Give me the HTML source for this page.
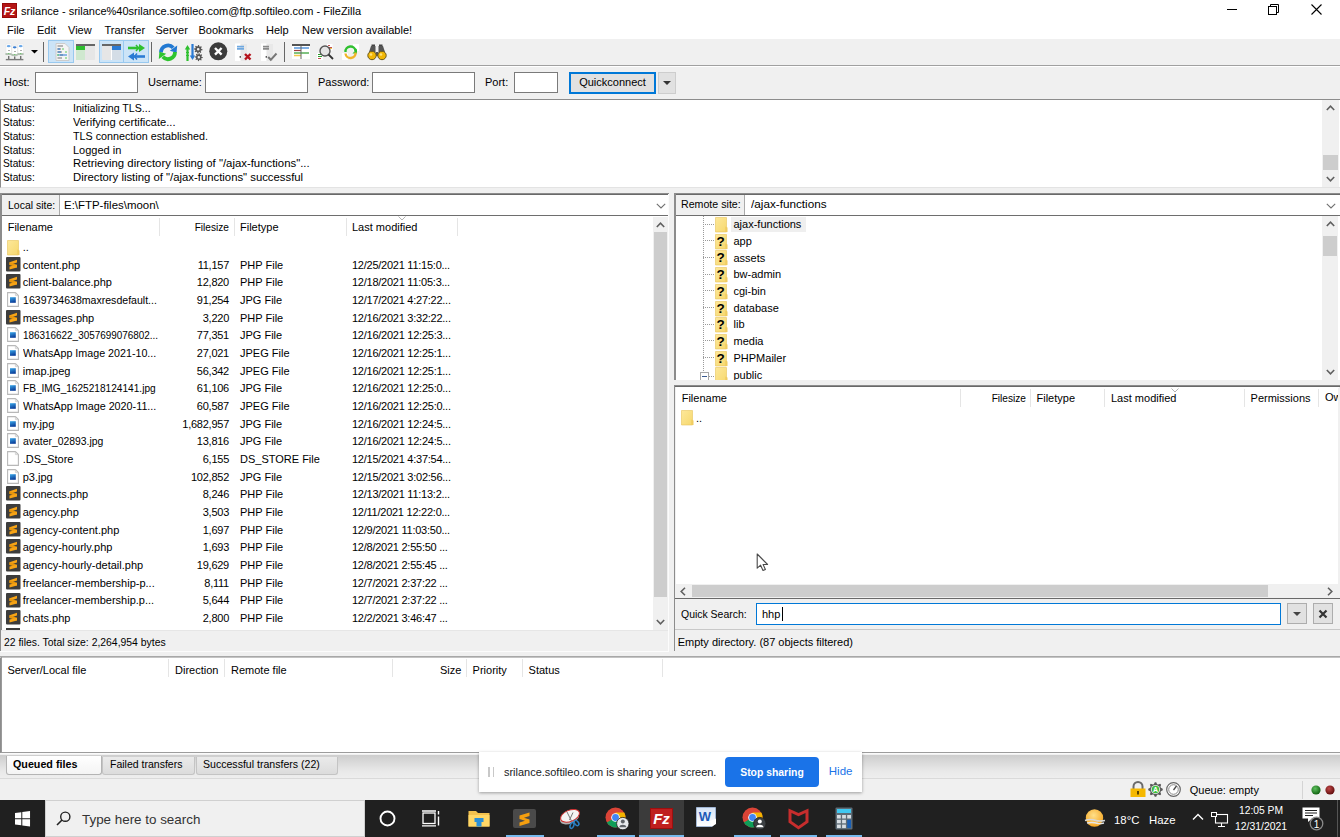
<!DOCTYPE html>
<html><head><meta charset="utf-8">
<style>
*{box-sizing:border-box;margin:0;padding:0}
html,body{width:1340px;height:837px;overflow:hidden;background:#f0f0f0;font-family:"Liberation Sans",sans-serif;font-size:11px;color:#000;position:relative}
.a{position:absolute}
.t{position:absolute;white-space:nowrap}
svg.a{overflow:visible}
</style></head><body>

<div class="a" style="left:0px;top:0px;width:1340px;height:39px;background:#fff;"></div>
<svg class="a" style="left:2px;top:3px;" width="15" height="15" viewBox="0 0 15 15"><rect x="0" y="0" width="15" height="15" fill="#b31515"/><rect x="0.5" y="0.5" width="14" height="14" fill="none" stroke="#7a0000" stroke-width="1" stroke-dasharray="1 1"/><text x="7.5" y="11.6" text-anchor="middle" font-family="Liberation Sans" font-style="italic" font-weight="bold" font-size="10.5" fill="#fff">Fz</text></svg>
<div class="t" style="top:4.49px;font-size:11px;line-height:14px;left:21px;">srilance - srilance%40srilance.softileo.com@ftp.softileo.com - FileZilla</div>
<div class="a" style="left:1227px;top:9px;width:10px;height:1px;background:#000;"></div>
<svg class="a" style="left:1268px;top:4px;" width="12" height="11" viewBox="0 0 12 11"><rect x="0.5" y="2.5" width="8" height="8" fill="none" stroke="#000"/><path d="M2.5 2.5V0.5H10.5V8.5H8.5" fill="none" stroke="#000"/></svg>
<svg class="a" style="left:1311px;top:4px;" width="12" height="12" viewBox="0 0 12 12"><path d="M0.5 0.5L10.5 10.5M10.5 0.5L0.5 10.5" stroke="#000" stroke-width="1.1"/></svg>
<div class="t" style="top:23.49px;font-size:11px;line-height:14px;left:7px;">File</div>
<div class="t" style="top:23.49px;font-size:11px;line-height:14px;left:37px;">Edit</div>
<div class="t" style="top:23.49px;font-size:11px;line-height:14px;left:68px;">View</div>
<div class="t" style="top:23.49px;font-size:11px;line-height:14px;left:104.5px;">Transfer</div>
<div class="t" style="top:23.49px;font-size:11px;line-height:14px;left:155.5px;">Server</div>
<div class="t" style="top:23.49px;font-size:11px;line-height:14px;left:198.5px;">Bookmarks</div>
<div class="t" style="top:23.49px;font-size:11px;line-height:14px;left:266px;">Help</div>
<div class="t" style="top:23.49px;font-size:11px;line-height:14px;left:302px;">New version available!</div>
<div class="a" style="left:0px;top:65px;width:1340px;height:1px;background:#a0a0a0;"></div>
<div class="a" style="left:0px;top:66px;width:1340px;height:1px;background:#fff;"></div>
<svg class="a" style="left:5px;top:42px;" width="19" height="19" viewBox="0 0 19 19"><rect x="1" y="2" width="5.5" height="11" fill="#fff" stroke="#e2e2e2" stroke-width=".5"/><rect x="7" y="3.2" width="5.5" height="11" fill="#fff" stroke="#e2e2e2" stroke-width=".5"/><rect x="13" y="2" width="5.5" height="11" fill="#fff" stroke="#e2e2e2" stroke-width=".5"/><ellipse cx="3.7" cy="4.2" rx="1.9" ry="1.1" fill="#6aa8e8"/><ellipse cx="9.7" cy="5.3" rx="1.9" ry="1.1" fill="#3d7fd0"/><ellipse cx="15.7" cy="4.2" rx="1.9" ry="1.1" fill="#6aa8e8"/><path d="M3 8.5H5M9 9.5H11M15 8.5H17" stroke="#999" stroke-width=".8"/><path d="M0.5 12H6.5M6.5 13H12.5M12.5 12H18.5" stroke="#6a8a6a" stroke-width="1"/><path d="M3.7 11V12M9.7 12V13M15.7 11V12" stroke="#66cc66" stroke-width="1"/><path d="M3.7 14V17.5M9.7 14.5V17.5M15.7 14V17.5" stroke="#707070" stroke-width="1.4"/><path d="M0.8 17.6H18.4" stroke="#7a7a7a" stroke-width="1.4"/></svg>
<svg class="a" style="left:30.5px;top:50px;" width="7" height="3.5" viewBox="0 0 7 3.5"><path d="M0 0H7L3.5 3.5Z" fill="#000"/></svg>
<div class="a" style="left:43px;top:42px;width:1px;height:20px;background:#666;"></div>
<div class="a" style="left:48px;top:40px;width:26px;height:23px;background:#cce4f7;border:1px solid #99c9ef;"></div>
<svg class="a" style="left:55px;top:43px;" width="15" height="18" viewBox="0 0 15 18"><path d="M1 0.5H10L14 4.5V17.5H1Z" fill="#f4f4f4" stroke="#ccc"/><path d="M2.5 3H8M2.5 6H6M2.5 9H7M5 12H8M2.5 15H7" stroke="#777" stroke-width="1.2"/><path d="M2.5 6H5M2.5 9H6M2.5 12H12" stroke="#2b7bd4" stroke-width="1.2"/><path d="M7 6H9M10 9H12M2 12H4M10 15H12" stroke="#5cc95c" stroke-width="1.2"/></svg>
<svg class="a" style="left:76px;top:44px;" width="19" height="16" viewBox="0 0 19 16"><rect x="0" y="0" width="19" height="16" fill="#e6e6e6" rx="1"/><rect x="0" y="0" width="19" height="2" fill="#666"/><rect x="0" y="2" width="9" height="4" fill="#2fbf2f"/><rect x="0" y="6" width="9" height="10" fill="#cfe8cf"/></svg>
<div class="a" style="left:99px;top:40px;width:50px;height:23px;background:#cce4f7;border:1px solid #99c9ef;"></div>
<div class="a" style="left:123px;top:41px;width:1px;height:21px;background:#99c9ef;"></div>
<svg class="a" style="left:102px;top:44px;" width="19" height="16" viewBox="0 0 19 16"><rect x="0" y="0" width="19" height="16" fill="#e6e6e6" rx="1"/><rect x="0" y="0" width="19" height="2" fill="#666"/><rect x="10" y="2" width="9" height="4" fill="#2b7bd4"/><rect x="10" y="6" width="9" height="10" fill="#d4dde6"/><rect x="9" y="6" width="1" height="10" fill="#fff"/></svg>
<svg class="a" style="left:127px;top:43px;" width="19" height="18" viewBox="0 0 19 18"><path d="M1 5H14" stroke="#2fc02f" stroke-width="2.6"/><path d="M12 1L18 5L12 9Z" fill="#2fc02f"/><path d="M9 2L11.5 5L9 8" fill="none" stroke="#2fc02f" stroke-width="1.5"/><path d="M5 13.5H18" stroke="#2b7bd4" stroke-width="2.6"/><path d="M7 9.5L1 13.5L7 17.5Z" fill="#2b7bd4"/><path d="M10 10.5L7.5 13.5L10 16.5" fill="none" stroke="#2b7bd4" stroke-width="1.5"/></svg>
<div class="a" style="left:151px;top:42px;width:1px;height:20px;background:#666;"></div>
<svg class="a" style="left:158px;top:42px;" width="20" height="20" viewBox="0 0 20 20"><path d="M3 10.5A7 7 0 0 1 15.2 5.8" fill="none" stroke="#2279d2" stroke-width="3.8"/><path d="M19.2 3.6L11.8 8.8L18.6 10.8Z" fill="#2279d2"/><path d="M17 10.1A7 7 0 0 1 4.8 14.8" fill="none" stroke="#2ec42e" stroke-width="3.8"/><path d="M0.8 17L8.2 11.8L1.4 9.8Z" fill="#2ec42e"/></svg>
<svg class="a" style="left:184px;top:43px;" width="19" height="19" viewBox="0 0 19 19"><path d="M3.5 4V18" stroke="#2fc02f" stroke-width="2.2"/><path d="M0.8 6.5L3.5 2L6.2 6.5Z" fill="#2fc02f"/><path d="M2 9.5H5M2 12.5H5" stroke="#2fc02f" stroke-width="1"/><path d="M8.5 1V15" stroke="#2b7bd4" stroke-width="2.2"/><path d="M5.8 12.5L8.5 17L11.2 12.5Z" fill="#2b7bd4"/><path d="M18.50 6.30 L18.42 7.14 L16.97 7.45 L16.69 7.97 L17.24 9.34 L16.59 9.88 L15.35 9.07 L14.79 9.24 L14.20 10.60 L13.36 10.52 L13.05 9.07 L12.53 8.79 L11.16 9.34 L10.62 8.69 L11.43 7.45 L11.26 6.89 L9.90 6.30 L9.98 5.46 L11.43 5.15 L11.71 4.63 L11.16 3.26 L11.81 2.72 L13.05 3.53 L13.61 3.36 L14.20 2.00 L15.04 2.08 L15.35 3.53 L15.87 3.81 L17.24 3.26 L17.78 3.91 L16.97 5.15 L17.14 5.71Z M15.50 6.30 A1.3 1.3 0 1 0 12.90 6.30 A1.3 1.3 0 1 0 15.50 6.30Z" fill="#555" fill-rule="evenodd"/><path d="M18.80 14.20 L18.72 14.98 L17.39 15.27 L17.13 15.76 L17.63 17.03 L17.02 17.53 L15.87 16.79 L15.35 16.95 L14.80 18.20 L14.02 18.12 L13.73 16.79 L13.24 16.53 L11.97 17.03 L11.47 16.42 L12.21 15.27 L12.05 14.75 L10.80 14.20 L10.88 13.42 L12.21 13.13 L12.47 12.64 L11.97 11.37 L12.58 10.87 L13.73 11.61 L14.25 11.45 L14.80 10.20 L15.58 10.28 L15.87 11.61 L16.36 11.87 L17.63 11.37 L18.13 11.98 L17.39 13.13 L17.55 13.65Z M16.00 14.20 A1.2 1.2 0 1 0 13.60 14.20 A1.2 1.2 0 1 0 16.00 14.20Z" fill="#555" fill-rule="evenodd"/></svg>
<svg class="a" style="left:209px;top:42px;" width="19" height="19" viewBox="0 0 19 19"><circle cx="9.3" cy="9.3" r="9" fill="#3c3c3c"/><path d="M6 6L12.6 12.6M12.6 6L6 12.6" stroke="#fff" stroke-width="2.4"/></svg>
<svg class="a" style="left:234px;top:43px;" width="19" height="19" viewBox="0 0 19 19"><rect x="1" y="0.5" width="12" height="17.5" fill="#fff"/><rect x="6.5" y="0.5" width="6.5" height="17.5" fill="#e8e8e8"/><path d="M3 3.6H10M3 5.9H10" stroke="#6fa8e0" stroke-width="1.6"/><rect x="5.6" y="13.2" width="1.4" height="1.4" fill="#333"/><path d="M11 11L16.5 16.5M16.5 11L11 16.5" stroke="#b5121b" stroke-width="2.4"/></svg>
<svg class="a" style="left:260px;top:43px;" width="19" height="19" viewBox="0 0 19 19"><rect x="1" y="0.5" width="12" height="17.5" fill="#fff"/><rect x="6.5" y="0.5" width="6.5" height="17.5" fill="#e8e8e8"/><path d="M3 3.6H9M3 5.9H9" stroke="#8a8a8a" stroke-width="1.6"/><rect x="5.6" y="13.2" width="1.4" height="1.4" fill="#333"/><path d="M8.2 14L10.8 16.8L16.5 10.5" fill="none" stroke="#777" stroke-width="2"/></svg>
<div class="a" style="left:284px;top:42px;width:1px;height:20px;background:#666;"></div>
<svg class="a" style="left:292px;top:44px;" width="19" height="16" viewBox="0 0 19 16"><rect x="0" y="0" width="18" height="15" fill="#fff"/><rect x="0" y="0" width="18" height="2" fill="#555"/><path d="M2 4H17" stroke="#2b7bd4" stroke-width="1.2"/><path d="M2 6.5H9" stroke="#a04040" stroke-width="1.2"/><path d="M2 9H17" stroke="#2a9a2a" stroke-width="1.2"/><path d="M2 11.5H9" stroke="#f2c94c" stroke-width="1.5"/><path d="M9 2V15" stroke="#666" stroke-width="1"/></svg>
<svg class="a" style="left:317px;top:43px;" width="19" height="19" viewBox="0 0 19 19"><rect x="10" y="1" width="5.5" height="6.5" fill="#fff"/><path d="M11 2.5H13M11.5 4.5H15" stroke="#c05050" stroke-width="1"/><path d="M11 5.5H15" stroke="#f2c94c"/><rect x="0" y="10" width="6" height="7" fill="#fff"/><path d="M1 11.5H4M1 13.5H5" stroke="#2a9a2a"/><path d="M1 15.5H4" stroke="#c05050"/><circle cx="8" cy="8" r="5" fill="#e4e4e4" stroke="#555" stroke-width="1.4"/><path d="M11.5 11.5L16 16" stroke="#333" stroke-width="1.8"/></svg>
<svg class="a" style="left:342px;top:43px;" width="19" height="19" viewBox="0 0 19 19"><rect x="11" y="1" width="6" height="7" fill="#fff"/><rect x="0" y="10" width="6" height="7" fill="#fff"/><path d="M3.5 9A5 5 0 0 1 13.5 8" fill="none" stroke="#2fc02f" stroke-width="2.4"/><path d="M15 5.5V10.5H10.5Z" fill="#2fc02f"/><path d="M13.5 9.5A5 5 0 0 1 3.5 10.5" fill="none" stroke="#f0b429" stroke-width="2.4"/></svg>
<svg class="a" style="left:367px;top:43px;" width="20" height="19" viewBox="0 0 20 19"><path d="M4.5 1.5H8V8H4.5Z M12 1.5H15.5V8H12Z" fill="#444"/><path d="M2 9L4 3H8.5V13H11.5V3H16L18 9Z" fill="#555"/><circle cx="5" cy="12.5" r="4.2" fill="#f2b705" stroke="#6b5a1c" stroke-width="1"/><circle cx="15" cy="12.5" r="4.2" fill="#f2b705" stroke="#6b5a1c" stroke-width="1"/><circle cx="4" cy="11.5" r="1.3" fill="#ffe27a"/><circle cx="14" cy="11.5" r="1.3" fill="#ffe27a"/></svg>
<div class="t" style="top:75.49px;font-size:11px;line-height:14px;left:4px;">Host:</div>
<div class="a" style="left:35px;top:72px;width:103px;height:21px;background:#fff;border:1px solid #7a7a7a;"></div>
<div class="t" style="top:75.49px;font-size:11px;line-height:14px;left:148px;">Username:</div>
<div class="a" style="left:205px;top:72px;width:103px;height:21px;background:#fff;border:1px solid #7a7a7a;"></div>
<div class="t" style="top:75.49px;font-size:11px;line-height:14px;left:318px;">Password:</div>
<div class="a" style="left:372px;top:72px;width:103px;height:21px;background:#fff;border:1px solid #7a7a7a;"></div>
<div class="t" style="top:75.49px;font-size:11px;line-height:14px;left:485px;">Port:</div>
<div class="a" style="left:514px;top:72px;width:44px;height:21px;background:#fff;border:1px solid #7a7a7a;"></div>
<div class="a" style="left:569px;top:72px;width:87px;height:22px;background:#e1e1e1;border:2px solid #0078d7;"></div>
<div class="t" style="top:75.49px;font-size:11px;line-height:14px;left:569.0px;width:87px;text-align:center;">Quickconnect</div>
<div class="a" style="left:658px;top:72px;width:18px;height:22px;background:#e1e1e1;border:1px solid #cdcdcd;"></div>
<svg class="a" style="left:663px;top:81px;" width="8" height="4" viewBox="0 0 8 4"><path d="M0 0H8L4 4Z" fill="#333"/></svg>
<div class="a" style="left:0px;top:99px;width:1340px;height:1px;background:#a0a0a0;"></div>
<div class="a" style="left:0px;top:99px;width:1340px;height:89px;background:#fff;border-top:1px solid #8c8c8c;border-left:1px solid #8c8c8c;border-bottom:1px solid #e3e3e3;"></div>
<div class="t" style="top:100.99px;font-size:11px;line-height:14px;left:3.3px;transform:scaleX(0.927);transform-origin:0 0;">Status:</div>
<div class="t" style="top:100.99px;font-size:11px;line-height:14px;left:73px;transform:scaleX(0.965);transform-origin:0 0;">Initializing TLS...</div>
<div class="t" style="top:114.83px;font-size:11px;line-height:14px;left:3.3px;transform:scaleX(0.927);transform-origin:0 0;">Status:</div>
<div class="t" style="top:114.83px;font-size:11px;line-height:14px;left:73px;transform:scaleX(1.01);transform-origin:0 0;">Verifying certificate...</div>
<div class="t" style="top:128.67px;font-size:11px;line-height:14px;left:3.3px;transform:scaleX(0.927);transform-origin:0 0;">Status:</div>
<div class="t" style="top:128.67px;font-size:11px;line-height:14px;left:73px;transform:scaleX(0.977);transform-origin:0 0;">TLS connection established.</div>
<div class="t" style="top:142.51px;font-size:11px;line-height:14px;left:3.3px;transform:scaleX(0.927);transform-origin:0 0;">Status:</div>
<div class="t" style="top:142.51px;font-size:11px;line-height:14px;left:73px;transform:scaleX(1.0);transform-origin:0 0;">Logged in</div>
<div class="t" style="top:156.35px;font-size:11px;line-height:14px;left:3.3px;transform:scaleX(0.927);transform-origin:0 0;">Status:</div>
<div class="t" style="top:156.35px;font-size:11px;line-height:14px;left:73px;transform:scaleX(1.033);transform-origin:0 0;">Retrieving directory listing of &quot;/ajax-functions&quot;...</div>
<div class="t" style="top:170.19px;font-size:11px;line-height:14px;left:3.3px;transform:scaleX(0.927);transform-origin:0 0;">Status:</div>
<div class="t" style="top:170.19px;font-size:11px;line-height:14px;left:73px;transform:scaleX(1.029);transform-origin:0 0;">Directory listing of &quot;/ajax-functions&quot; successful</div>
<div class="a" style="left:1322px;top:100px;width:17px;height:87px;background:#f0f0f0;"></div>
<svg class="a" style="left:1326px;top:105px;" width="9" height="6" viewBox="0 0 9 6"><path d="M0.8 5L4.5 1.2L8.2 5" fill="none" stroke="#606060" stroke-width="1.6"/></svg>
<div class="a" style="left:1323px;top:155px;width:15px;height:15px;background:#cdcdcd;"></div>
<svg class="a" style="left:1326px;top:176px;" width="9" height="6" viewBox="0 0 9 6"><path d="M0.8 1L4.5 4.8L8.2 1" fill="none" stroke="#606060" stroke-width="1.6"/></svg>
<svg width="0" height="0" style="position:absolute"><defs><linearGradient id="fg" x1="0" y1="0" x2="1" y2="1"><stop offset="0" stop-color="#fde89a"/><stop offset="1" stop-color="#f6d86e"/></linearGradient><linearGradient id="ib" x1="0" y1="0" x2="0.3" y2="1"><stop offset="0" stop-color="#3aa8ea"/><stop offset="1" stop-color="#0b3f9a"/></linearGradient></defs></svg>
<div class="a" style="left:0px;top:193px;width:669px;height:458px;background:#f0f0f0;border-top:1px solid #8c8c8c;border-left:1px solid #8c8c8c;"></div>
<div class="a" style="left:1px;top:194px;width:668px;height:2px;background:#696969;"></div>
<div class="a" style="left:1px;top:194px;width:668px;height:22px;background:#fff;"></div>
<div class="a" style="left:2px;top:194px;width:58px;height:21px;background:#f0f0f0;border-right:1px solid #aaa;border-top:1px solid #696969;"></div>
<div class="a" style="left:1px;top:194px;width:667px;height:1px;background:#696969;"></div>
<div class="a" style="left:1px;top:215px;width:667px;height:1px;background:#6e6e6e;"></div>
<div class="t" style="top:197.69px;font-size:11px;line-height:14px;left:7.5px;transform:scaleX(0.953);transform-origin:0 0;">Local site:</div>
<div class="t" style="top:197.69px;font-size:11px;line-height:14px;left:64px;transform:scaleX(1.04);transform-origin:0 0;">E:\FTP-files\moon\</div>
<svg class="a" style="left:656px;top:202.5px;" width="10" height="6" viewBox="0 0 10 6"><path d="M0.8 0.8L5 5L9.2 0.8" fill="none" stroke="#707070" stroke-width="1.1"/></svg>
<div class="a" style="left:1px;top:216px;width:667px;height:414px;background:#fff;"></div>
<div class="a" style="left:1px;top:194px;width:1px;height:457px;background:#8c8c8c;"></div>
<div class="a" style="left:159px;top:218px;width:1px;height:18px;background:#e5e5e5;"></div>
<div class="a" style="left:234px;top:218px;width:1px;height:18px;background:#e5e5e5;"></div>
<div class="a" style="left:346px;top:218px;width:1px;height:18px;background:#e5e5e5;"></div>
<div class="a" style="left:457px;top:218px;width:1px;height:18px;background:#e5e5e5;"></div>
<div class="t" style="top:219.99px;font-size:11px;line-height:14px;left:7.7px;">Filename</div>
<div class="t" style="top:219.99px;font-size:11px;line-height:14px;left:149px;width:80px;text-align:right;transform:scaleX(0.92);transform-origin:100% 0;">Filesize</div>
<div class="t" style="top:219.99px;font-size:11px;line-height:14px;left:240px;">Filetype</div>
<div class="t" style="top:219.99px;font-size:11px;line-height:14px;left:352px;">Last modified</div>
<svg class="a" style="left:398px;top:215.5px;" width="8" height="5" viewBox="0 0 8 5"><path d="M0.5 0.5L4 4L7.5 0.5" fill="none" stroke="#aaa" stroke-width="0.9"/></svg>
<svg class="a" style="left:7.3px;top:239.5px;" width="13" height="15" viewBox="0 0 13 15"><path d="M0.5 0.5H11.5V15H0.5Z" fill="url(#fg)" stroke="#e8c55a" stroke-width="0.6"/><path d="M10.3 9.5V15H12.5V10.5Z" fill="#f0cc60"/></svg>
<div class="t" style="top:239.99px;font-size:11px;line-height:14px;left:22.7px;">..</div>
<svg class="a" style="left:5.8px;top:256.675px;" width="15" height="15" viewBox="0 0 15 15"><rect x="0" y="0" width="14.5" height="14.5" rx="1" fill="#3d3d3d"/><path d="M3.5 5.3L11 2.8V5.6L3.5 8.1Z" fill="#f7a416"/><path d="M3.5 5.3L11 7.8V10.6L3.5 8.1Z" fill="#e8960c"/><path d="M3.5 9.6L11 7.8V10.6L3.5 12.4Z" fill="#f7a416"/></svg>
<div class="t" style="top:257.66px;font-size:11px;line-height:14px;left:22.7px;">content.php</div>
<div class="t" style="top:257.66px;font-size:11px;line-height:14px;left:149px;width:80px;text-align:right;letter-spacing:-0.25px;">11,157</div>
<div class="t" style="top:257.66px;font-size:11px;line-height:14px;left:240px;">PHP File</div>
<div class="t" style="top:257.66px;font-size:11px;line-height:14px;left:352px;letter-spacing:-0.25px;">12/25/2021 11:15:0...</div>
<svg class="a" style="left:5.8px;top:274.35px;" width="15" height="15" viewBox="0 0 15 15"><rect x="0" y="0" width="14.5" height="14.5" rx="1" fill="#3d3d3d"/><path d="M3.5 5.3L11 2.8V5.6L3.5 8.1Z" fill="#f7a416"/><path d="M3.5 5.3L11 7.8V10.6L3.5 8.1Z" fill="#e8960c"/><path d="M3.5 9.6L11 7.8V10.6L3.5 12.4Z" fill="#f7a416"/></svg>
<div class="t" style="top:275.34px;font-size:11px;line-height:14px;left:22.7px;">client-balance.php</div>
<div class="t" style="top:275.34px;font-size:11px;line-height:14px;left:149px;width:80px;text-align:right;letter-spacing:-0.25px;">12,820</div>
<div class="t" style="top:275.34px;font-size:11px;line-height:14px;left:240px;">PHP File</div>
<div class="t" style="top:275.34px;font-size:11px;line-height:14px;left:352px;letter-spacing:-0.25px;">12/18/2021 11:05:3...</div>
<svg class="a" style="left:7.2px;top:291.92500000000007px;" width="12" height="15" viewBox="0 0 12 15"><path d="M0.6 0.6H8.4L11.4 3.6V14.4H0.6Z" fill="#fff" stroke="#b8b8b8" stroke-width="1.1"/><path d="M8.4 0.6V3.6H11.4" fill="none" stroke="#ccc" stroke-width="0.8"/><rect x="3" y="5.2" width="5.8" height="5.6" fill="url(#ib)"/></svg>
<div class="t" style="top:293.01px;font-size:11px;line-height:14px;left:22.7px;transform:scaleX(0.9605);transform-origin:0 0;">1639734638maxresdefault...</div>
<div class="t" style="top:293.01px;font-size:11px;line-height:14px;left:149px;width:80px;text-align:right;letter-spacing:-0.25px;">91,254</div>
<div class="t" style="top:293.01px;font-size:11px;line-height:14px;left:240px;">JPG File</div>
<div class="t" style="top:293.01px;font-size:11px;line-height:14px;left:352px;letter-spacing:-0.25px;">12/17/2021 4:27:22...</div>
<svg class="a" style="left:5.8px;top:309.7px;" width="15" height="15" viewBox="0 0 15 15"><rect x="0" y="0" width="14.5" height="14.5" rx="1" fill="#3d3d3d"/><path d="M3.5 5.3L11 2.8V5.6L3.5 8.1Z" fill="#f7a416"/><path d="M3.5 5.3L11 7.8V10.6L3.5 8.1Z" fill="#e8960c"/><path d="M3.5 9.6L11 7.8V10.6L3.5 12.4Z" fill="#f7a416"/></svg>
<div class="t" style="top:310.69px;font-size:11px;line-height:14px;left:22.7px;">messages.php</div>
<div class="t" style="top:310.69px;font-size:11px;line-height:14px;left:149px;width:80px;text-align:right;letter-spacing:-0.25px;">3,220</div>
<div class="t" style="top:310.69px;font-size:11px;line-height:14px;left:240px;">PHP File</div>
<div class="t" style="top:310.69px;font-size:11px;line-height:14px;left:352px;letter-spacing:-0.25px;">12/16/2021 3:32:22...</div>
<svg class="a" style="left:7.2px;top:327.27500000000003px;" width="12" height="15" viewBox="0 0 12 15"><path d="M0.6 0.6H8.4L11.4 3.6V14.4H0.6Z" fill="#fff" stroke="#b8b8b8" stroke-width="1.1"/><path d="M8.4 0.6V3.6H11.4" fill="none" stroke="#ccc" stroke-width="0.8"/><rect x="3" y="5.2" width="5.8" height="5.6" fill="url(#ib)"/></svg>
<div class="t" style="top:328.36px;font-size:11px;line-height:14px;left:22.7px;transform:scaleX(0.9013);transform-origin:0 0;">186316622_3057699076802...</div>
<div class="t" style="top:328.36px;font-size:11px;line-height:14px;left:149px;width:80px;text-align:right;letter-spacing:-0.25px;">77,351</div>
<div class="t" style="top:328.36px;font-size:11px;line-height:14px;left:240px;">JPG File</div>
<div class="t" style="top:328.36px;font-size:11px;line-height:14px;left:352px;letter-spacing:-0.25px;">12/16/2021 12:25:3...</div>
<svg class="a" style="left:7.2px;top:344.95000000000005px;" width="12" height="15" viewBox="0 0 12 15"><path d="M0.6 0.6H8.4L11.4 3.6V14.4H0.6Z" fill="#fff" stroke="#b8b8b8" stroke-width="1.1"/><path d="M8.4 0.6V3.6H11.4" fill="none" stroke="#ccc" stroke-width="0.8"/><rect x="3" y="5.2" width="5.8" height="5.6" fill="url(#ib)"/></svg>
<div class="t" style="top:346.04px;font-size:11px;line-height:14px;left:22.7px;transform:scaleX(0.973);transform-origin:0 0;">WhatsApp Image 2021-10...</div>
<div class="t" style="top:346.04px;font-size:11px;line-height:14px;left:149px;width:80px;text-align:right;letter-spacing:-0.25px;">27,021</div>
<div class="t" style="top:346.04px;font-size:11px;line-height:14px;left:240px;">JPEG File</div>
<div class="t" style="top:346.04px;font-size:11px;line-height:14px;left:352px;letter-spacing:-0.25px;">12/16/2021 12:25:1...</div>
<svg class="a" style="left:7.2px;top:362.62500000000006px;" width="12" height="15" viewBox="0 0 12 15"><path d="M0.6 0.6H8.4L11.4 3.6V14.4H0.6Z" fill="#fff" stroke="#b8b8b8" stroke-width="1.1"/><path d="M8.4 0.6V3.6H11.4" fill="none" stroke="#ccc" stroke-width="0.8"/><rect x="3" y="5.2" width="5.8" height="5.6" fill="url(#ib)"/></svg>
<div class="t" style="top:363.71px;font-size:11px;line-height:14px;left:22.7px;">imap.jpeg</div>
<div class="t" style="top:363.71px;font-size:11px;line-height:14px;left:149px;width:80px;text-align:right;letter-spacing:-0.25px;">56,342</div>
<div class="t" style="top:363.71px;font-size:11px;line-height:14px;left:240px;">JPEG File</div>
<div class="t" style="top:363.71px;font-size:11px;line-height:14px;left:352px;letter-spacing:-0.25px;">12/16/2021 12:25:1...</div>
<svg class="a" style="left:7.2px;top:380.30000000000007px;" width="12" height="15" viewBox="0 0 12 15"><path d="M0.6 0.6H8.4L11.4 3.6V14.4H0.6Z" fill="#fff" stroke="#b8b8b8" stroke-width="1.1"/><path d="M8.4 0.6V3.6H11.4" fill="none" stroke="#ccc" stroke-width="0.8"/><rect x="3" y="5.2" width="5.8" height="5.6" fill="url(#ib)"/></svg>
<div class="t" style="top:381.39px;font-size:11px;line-height:14px;left:22.7px;transform:scaleX(0.9189);transform-origin:0 0;">FB_IMG_1625218124141.jpg</div>
<div class="t" style="top:381.39px;font-size:11px;line-height:14px;left:149px;width:80px;text-align:right;letter-spacing:-0.25px;">61,106</div>
<div class="t" style="top:381.39px;font-size:11px;line-height:14px;left:240px;">JPG File</div>
<div class="t" style="top:381.39px;font-size:11px;line-height:14px;left:352px;letter-spacing:-0.25px;">12/16/2021 12:25:0...</div>
<svg class="a" style="left:7.2px;top:397.975px;" width="12" height="15" viewBox="0 0 12 15"><path d="M0.6 0.6H8.4L11.4 3.6V14.4H0.6Z" fill="#fff" stroke="#b8b8b8" stroke-width="1.1"/><path d="M8.4 0.6V3.6H11.4" fill="none" stroke="#ccc" stroke-width="0.8"/><rect x="3" y="5.2" width="5.8" height="5.6" fill="url(#ib)"/></svg>
<div class="t" style="top:399.06px;font-size:11px;line-height:14px;left:22.7px;transform:scaleX(0.9794);transform-origin:0 0;">WhatsApp Image 2020-11...</div>
<div class="t" style="top:399.06px;font-size:11px;line-height:14px;left:149px;width:80px;text-align:right;letter-spacing:-0.25px;">60,587</div>
<div class="t" style="top:399.06px;font-size:11px;line-height:14px;left:240px;">JPEG File</div>
<div class="t" style="top:399.06px;font-size:11px;line-height:14px;left:352px;letter-spacing:-0.25px;">12/16/2021 12:25:0...</div>
<svg class="a" style="left:7.2px;top:415.65000000000003px;" width="12" height="15" viewBox="0 0 12 15"><path d="M0.6 0.6H8.4L11.4 3.6V14.4H0.6Z" fill="#fff" stroke="#b8b8b8" stroke-width="1.1"/><path d="M8.4 0.6V3.6H11.4" fill="none" stroke="#ccc" stroke-width="0.8"/><rect x="3" y="5.2" width="5.8" height="5.6" fill="url(#ib)"/></svg>
<div class="t" style="top:416.74px;font-size:11px;line-height:14px;left:22.7px;">my.jpg</div>
<div class="t" style="top:416.74px;font-size:11px;line-height:14px;left:149px;width:80px;text-align:right;letter-spacing:-0.25px;">1,682,957</div>
<div class="t" style="top:416.74px;font-size:11px;line-height:14px;left:240px;">JPG File</div>
<div class="t" style="top:416.74px;font-size:11px;line-height:14px;left:352px;letter-spacing:-0.25px;">12/16/2021 12:24:5...</div>
<svg class="a" style="left:7.2px;top:433.32500000000005px;" width="12" height="15" viewBox="0 0 12 15"><path d="M0.6 0.6H8.4L11.4 3.6V14.4H0.6Z" fill="#fff" stroke="#b8b8b8" stroke-width="1.1"/><path d="M8.4 0.6V3.6H11.4" fill="none" stroke="#ccc" stroke-width="0.8"/><rect x="3" y="5.2" width="5.8" height="5.6" fill="url(#ib)"/></svg>
<div class="t" style="top:434.41px;font-size:11px;line-height:14px;left:22.7px;transform:scaleX(0.9447);transform-origin:0 0;">avater_02893.jpg</div>
<div class="t" style="top:434.41px;font-size:11px;line-height:14px;left:149px;width:80px;text-align:right;letter-spacing:-0.25px;">13,816</div>
<div class="t" style="top:434.41px;font-size:11px;line-height:14px;left:240px;">JPG File</div>
<div class="t" style="top:434.41px;font-size:11px;line-height:14px;left:352px;letter-spacing:-0.25px;">12/16/2021 12:24:5...</div>
<svg class="a" style="left:7.2px;top:451.00000000000006px;" width="12" height="15" viewBox="0 0 12 15"><path d="M0.6 0.6H8.4L11.4 3.6V14.4H0.6Z" fill="#fff" stroke="#b8b8b8" stroke-width="1.1"/><path d="M8.4 0.6V3.6H11.4" fill="none" stroke="#ccc" stroke-width="0.8"/></svg>
<div class="t" style="top:452.09px;font-size:11px;line-height:14px;left:22.7px;">.DS_Store</div>
<div class="t" style="top:452.09px;font-size:11px;line-height:14px;left:149px;width:80px;text-align:right;letter-spacing:-0.25px;">6,155</div>
<div class="t" style="top:452.09px;font-size:11px;line-height:14px;left:240px;">DS_STORE File</div>
<div class="t" style="top:452.09px;font-size:11px;line-height:14px;left:352px;letter-spacing:-0.25px;">12/15/2021 4:37:54...</div>
<svg class="a" style="left:7.2px;top:468.67500000000007px;" width="12" height="15" viewBox="0 0 12 15"><path d="M0.6 0.6H8.4L11.4 3.6V14.4H0.6Z" fill="#fff" stroke="#b8b8b8" stroke-width="1.1"/><path d="M8.4 0.6V3.6H11.4" fill="none" stroke="#ccc" stroke-width="0.8"/><rect x="3" y="5.2" width="5.8" height="5.6" fill="url(#ib)"/></svg>
<div class="t" style="top:469.76px;font-size:11px;line-height:14px;left:22.7px;">p3.jpg</div>
<div class="t" style="top:469.76px;font-size:11px;line-height:14px;left:149px;width:80px;text-align:right;letter-spacing:-0.25px;">102,852</div>
<div class="t" style="top:469.76px;font-size:11px;line-height:14px;left:240px;">JPG File</div>
<div class="t" style="top:469.76px;font-size:11px;line-height:14px;left:352px;letter-spacing:-0.25px;">12/15/2021 3:02:56...</div>
<svg class="a" style="left:5.8px;top:486.45px;" width="15" height="15" viewBox="0 0 15 15"><rect x="0" y="0" width="14.5" height="14.5" rx="1" fill="#3d3d3d"/><path d="M3.5 5.3L11 2.8V5.6L3.5 8.1Z" fill="#f7a416"/><path d="M3.5 5.3L11 7.8V10.6L3.5 8.1Z" fill="#e8960c"/><path d="M3.5 9.6L11 7.8V10.6L3.5 12.4Z" fill="#f7a416"/></svg>
<div class="t" style="top:487.44px;font-size:11px;line-height:14px;left:22.7px;">connects.php</div>
<div class="t" style="top:487.44px;font-size:11px;line-height:14px;left:149px;width:80px;text-align:right;letter-spacing:-0.25px;">8,246</div>
<div class="t" style="top:487.44px;font-size:11px;line-height:14px;left:240px;">PHP File</div>
<div class="t" style="top:487.44px;font-size:11px;line-height:14px;left:352px;letter-spacing:-0.25px;">12/13/2021 11:13:2...</div>
<svg class="a" style="left:5.8px;top:504.12499999999994px;" width="15" height="15" viewBox="0 0 15 15"><rect x="0" y="0" width="14.5" height="14.5" rx="1" fill="#3d3d3d"/><path d="M3.5 5.3L11 2.8V5.6L3.5 8.1Z" fill="#f7a416"/><path d="M3.5 5.3L11 7.8V10.6L3.5 8.1Z" fill="#e8960c"/><path d="M3.5 9.6L11 7.8V10.6L3.5 12.4Z" fill="#f7a416"/></svg>
<div class="t" style="top:505.11px;font-size:11px;line-height:14px;left:22.7px;">agency.php</div>
<div class="t" style="top:505.11px;font-size:11px;line-height:14px;left:149px;width:80px;text-align:right;letter-spacing:-0.25px;">3,503</div>
<div class="t" style="top:505.11px;font-size:11px;line-height:14px;left:240px;">PHP File</div>
<div class="t" style="top:505.11px;font-size:11px;line-height:14px;left:352px;letter-spacing:-0.25px;">12/11/2021 12:22:0...</div>
<svg class="a" style="left:5.8px;top:521.8000000000001px;" width="15" height="15" viewBox="0 0 15 15"><rect x="0" y="0" width="14.5" height="14.5" rx="1" fill="#3d3d3d"/><path d="M3.5 5.3L11 2.8V5.6L3.5 8.1Z" fill="#f7a416"/><path d="M3.5 5.3L11 7.8V10.6L3.5 8.1Z" fill="#e8960c"/><path d="M3.5 9.6L11 7.8V10.6L3.5 12.4Z" fill="#f7a416"/></svg>
<div class="t" style="top:522.79px;font-size:11px;line-height:14px;left:22.7px;">agency-content.php</div>
<div class="t" style="top:522.79px;font-size:11px;line-height:14px;left:149px;width:80px;text-align:right;letter-spacing:-0.25px;">1,697</div>
<div class="t" style="top:522.79px;font-size:11px;line-height:14px;left:240px;">PHP File</div>
<div class="t" style="top:522.79px;font-size:11px;line-height:14px;left:352px;letter-spacing:-0.25px;">12/9/2021 11:03:50...</div>
<svg class="a" style="left:5.8px;top:539.4750000000001px;" width="15" height="15" viewBox="0 0 15 15"><rect x="0" y="0" width="14.5" height="14.5" rx="1" fill="#3d3d3d"/><path d="M3.5 5.3L11 2.8V5.6L3.5 8.1Z" fill="#f7a416"/><path d="M3.5 5.3L11 7.8V10.6L3.5 8.1Z" fill="#e8960c"/><path d="M3.5 9.6L11 7.8V10.6L3.5 12.4Z" fill="#f7a416"/></svg>
<div class="t" style="top:540.46px;font-size:11px;line-height:14px;left:22.7px;">agency-hourly.php</div>
<div class="t" style="top:540.46px;font-size:11px;line-height:14px;left:149px;width:80px;text-align:right;letter-spacing:-0.25px;">1,693</div>
<div class="t" style="top:540.46px;font-size:11px;line-height:14px;left:240px;">PHP File</div>
<div class="t" style="top:540.46px;font-size:11px;line-height:14px;left:352px;letter-spacing:-0.25px;">12/8/2021 2:55:50 ...</div>
<svg class="a" style="left:5.8px;top:557.1500000000001px;" width="15" height="15" viewBox="0 0 15 15"><rect x="0" y="0" width="14.5" height="14.5" rx="1" fill="#3d3d3d"/><path d="M3.5 5.3L11 2.8V5.6L3.5 8.1Z" fill="#f7a416"/><path d="M3.5 5.3L11 7.8V10.6L3.5 8.1Z" fill="#e8960c"/><path d="M3.5 9.6L11 7.8V10.6L3.5 12.4Z" fill="#f7a416"/></svg>
<div class="t" style="top:558.14px;font-size:11px;line-height:14px;left:22.7px;">agency-hourly-detail.php</div>
<div class="t" style="top:558.14px;font-size:11px;line-height:14px;left:149px;width:80px;text-align:right;letter-spacing:-0.25px;">19,629</div>
<div class="t" style="top:558.14px;font-size:11px;line-height:14px;left:240px;">PHP File</div>
<div class="t" style="top:558.14px;font-size:11px;line-height:14px;left:352px;letter-spacing:-0.25px;">12/8/2021 2:55:45 ...</div>
<svg class="a" style="left:5.8px;top:574.825px;" width="15" height="15" viewBox="0 0 15 15"><rect x="0" y="0" width="14.5" height="14.5" rx="1" fill="#3d3d3d"/><path d="M3.5 5.3L11 2.8V5.6L3.5 8.1Z" fill="#f7a416"/><path d="M3.5 5.3L11 7.8V10.6L3.5 8.1Z" fill="#e8960c"/><path d="M3.5 9.6L11 7.8V10.6L3.5 12.4Z" fill="#f7a416"/></svg>
<div class="t" style="top:575.81px;font-size:11px;line-height:14px;left:22.7px;">freelancer-membership-p...</div>
<div class="t" style="top:575.81px;font-size:11px;line-height:14px;left:149px;width:80px;text-align:right;letter-spacing:-0.25px;">8,111</div>
<div class="t" style="top:575.81px;font-size:11px;line-height:14px;left:240px;">PHP File</div>
<div class="t" style="top:575.81px;font-size:11px;line-height:14px;left:352px;letter-spacing:-0.25px;">12/7/2021 2:37:22 ...</div>
<svg class="a" style="left:5.8px;top:592.5px;" width="15" height="15" viewBox="0 0 15 15"><rect x="0" y="0" width="14.5" height="14.5" rx="1" fill="#3d3d3d"/><path d="M3.5 5.3L11 2.8V5.6L3.5 8.1Z" fill="#f7a416"/><path d="M3.5 5.3L11 7.8V10.6L3.5 8.1Z" fill="#e8960c"/><path d="M3.5 9.6L11 7.8V10.6L3.5 12.4Z" fill="#f7a416"/></svg>
<div class="t" style="top:593.49px;font-size:11px;line-height:14px;left:22.7px;">freelancer-membership.p...</div>
<div class="t" style="top:593.49px;font-size:11px;line-height:14px;left:149px;width:80px;text-align:right;letter-spacing:-0.25px;">5,644</div>
<div class="t" style="top:593.49px;font-size:11px;line-height:14px;left:240px;">PHP File</div>
<div class="t" style="top:593.49px;font-size:11px;line-height:14px;left:352px;letter-spacing:-0.25px;">12/7/2021 2:37:22 ...</div>
<svg class="a" style="left:5.8px;top:610.1750000000001px;" width="15" height="15" viewBox="0 0 15 15"><rect x="0" y="0" width="14.5" height="14.5" rx="1" fill="#3d3d3d"/><path d="M3.5 5.3L11 2.8V5.6L3.5 8.1Z" fill="#f7a416"/><path d="M3.5 5.3L11 7.8V10.6L3.5 8.1Z" fill="#e8960c"/><path d="M3.5 9.6L11 7.8V10.6L3.5 12.4Z" fill="#f7a416"/></svg>
<div class="t" style="top:611.16px;font-size:11px;line-height:14px;left:22.7px;">chats.php</div>
<div class="t" style="top:611.16px;font-size:11px;line-height:14px;left:149px;width:80px;text-align:right;letter-spacing:-0.25px;">2,800</div>
<div class="t" style="top:611.16px;font-size:11px;line-height:14px;left:240px;">PHP File</div>
<div class="t" style="top:611.16px;font-size:11px;line-height:14px;left:352px;letter-spacing:-0.25px;">12/2/2021 3:46:47 ...</div>
<div class="a" style="left:5.8px;top:628.3px;width:14.5px;height:1.4px;background:#3d3d3d;"></div>
<div class="a" style="left:653px;top:217px;width:15px;height:413px;background:#f0f0f0;"></div>
<svg class="a" style="left:656.0px;top:222px;" width="9" height="6" viewBox="0 0 9 6"><path d="M0.8 5L4.5 1.2L8.2 5" fill="none" stroke="#606060" stroke-width="1.6"/></svg>
<div class="a" style="left:654px;top:232px;width:13px;height:365px;background:#cdcdcd;"></div>
<svg class="a" style="left:656.0px;top:619px;" width="9" height="6" viewBox="0 0 9 6"><path d="M0.8 1L4.5 4.8L8.2 1" fill="none" stroke="#606060" stroke-width="1.6"/></svg>
<div class="a" style="left:1px;top:630px;width:667px;height:21px;background:#f0f0f0;"></div>
<div class="a" style="left:1px;top:630px;width:667px;height:1px;background:#e6e6e6;"></div>
<div class="a" style="left:668px;top:194px;width:1px;height:457px;background:#fcfcfc;"></div>
<div class="a" style="left:0px;top:651px;width:669px;height:1px;background:#fcfcfc;"></div>
<div class="t" style="top:634.69px;font-size:11px;line-height:14px;left:3.6px;transform:scaleX(0.945);transform-origin:0 0;">22 files. Total size: 2,264,954 bytes</div>
<div class="a" style="left:674px;top:193px;width:666px;height:190px;background:#fff;border-top:1px solid #8c8c8c;border-left:1px solid #8c8c8c;"></div>
<div class="a" style="left:675px;top:194px;width:665px;height:1px;background:#696969;"></div>
<div class="a" style="left:676px;top:195px;width:69px;height:20px;background:#f0f0f0;border-right:1px solid #aaa;"></div>
<div class="a" style="left:675px;top:215px;width:665px;height:1px;background:#6e6e6e;"></div>
<div class="a" style="left:675px;top:194px;width:1px;height:189px;background:#8c8c8c;"></div>
<div class="t" style="top:196.99px;font-size:11px;line-height:14px;left:680.5px;transform:scaleX(0.967);transform-origin:0 0;">Remote site:</div>
<div class="t" style="top:196.99px;font-size:11px;line-height:14px;left:750.8px;transform:scaleX(1.066);transform-origin:0 0;">/ajax-functions</div>
<svg class="a" style="left:1326px;top:202.5px;" width="10" height="6" viewBox="0 0 10 6"><path d="M0.8 0.8L5 5L9.2 0.8" fill="none" stroke="#707070" stroke-width="1.1"/></svg>
<div class="a" style="left:731px;top:217px;width:74.5px;height:15px;background:#efefef;"></div>
<svg class="a" style="left:703px;top:223.5px;" width="12" height="1" viewBox="0 0 12 1"><path d="M0 0.5H12" stroke="#9a9a9a" stroke-width="1" stroke-dasharray="1 1"/></svg>
<svg class="a" style="left:715.3px;top:217.0px;" width="13" height="15" viewBox="0 0 13 15"><path d="M0.5 0.5H11.5V15H0.5Z" fill="url(#fg)" stroke="#e8c55a" stroke-width="0.6"/><path d="M10.3 9.5V15H12.5V10.5Z" fill="#f0cc60"/></svg>
<div class="t" style="top:217.19px;font-size:11px;line-height:14px;left:733.5px;">ajax-functions</div>
<svg class="a" style="left:703px;top:240.21px;" width="12" height="1" viewBox="0 0 12 1"><path d="M0 0.5H12" stroke="#9a9a9a" stroke-width="1" stroke-dasharray="1 1"/></svg>
<svg class="a" style="left:715.3px;top:233.71px;" width="13" height="15" viewBox="0 0 13 15"><path d="M0.5 0.5H11.5V15H0.5Z" fill="url(#fg)" stroke="#e8c55a" stroke-width="0.6"/><path d="M10.3 9.5V15H12.5V10.5Z" fill="#f0cc60"/></svg>
<svg class="a" style="left:715.3px;top:233.71px;" width="13" height="15" viewBox="0 0 13 15"><text x="5.6" y="12" text-anchor="middle" font-family="Liberation Sans" font-weight="bold" font-size="13.5" fill="#000">?</text></svg>
<div class="t" style="top:233.90px;font-size:11px;line-height:14px;left:733.5px;">app</div>
<svg class="a" style="left:703px;top:256.92px;" width="12" height="1" viewBox="0 0 12 1"><path d="M0 0.5H12" stroke="#9a9a9a" stroke-width="1" stroke-dasharray="1 1"/></svg>
<svg class="a" style="left:715.3px;top:250.42000000000002px;" width="13" height="15" viewBox="0 0 13 15"><path d="M0.5 0.5H11.5V15H0.5Z" fill="url(#fg)" stroke="#e8c55a" stroke-width="0.6"/><path d="M10.3 9.5V15H12.5V10.5Z" fill="#f0cc60"/></svg>
<svg class="a" style="left:715.3px;top:250.42000000000002px;" width="13" height="15" viewBox="0 0 13 15"><text x="5.6" y="12" text-anchor="middle" font-family="Liberation Sans" font-weight="bold" font-size="13.5" fill="#000">?</text></svg>
<div class="t" style="top:250.61px;font-size:11px;line-height:14px;left:733.5px;">assets</div>
<svg class="a" style="left:703px;top:273.63px;" width="12" height="1" viewBox="0 0 12 1"><path d="M0 0.5H12" stroke="#9a9a9a" stroke-width="1" stroke-dasharray="1 1"/></svg>
<svg class="a" style="left:715.3px;top:267.13px;" width="13" height="15" viewBox="0 0 13 15"><path d="M0.5 0.5H11.5V15H0.5Z" fill="url(#fg)" stroke="#e8c55a" stroke-width="0.6"/><path d="M10.3 9.5V15H12.5V10.5Z" fill="#f0cc60"/></svg>
<svg class="a" style="left:715.3px;top:267.13px;" width="13" height="15" viewBox="0 0 13 15"><text x="5.6" y="12" text-anchor="middle" font-family="Liberation Sans" font-weight="bold" font-size="13.5" fill="#000">?</text></svg>
<div class="t" style="top:267.32px;font-size:11px;line-height:14px;left:733.5px;">bw-admin</div>
<svg class="a" style="left:703px;top:290.34000000000003px;" width="12" height="1" viewBox="0 0 12 1"><path d="M0 0.5H12" stroke="#9a9a9a" stroke-width="1" stroke-dasharray="1 1"/></svg>
<svg class="a" style="left:715.3px;top:283.84000000000003px;" width="13" height="15" viewBox="0 0 13 15"><path d="M0.5 0.5H11.5V15H0.5Z" fill="url(#fg)" stroke="#e8c55a" stroke-width="0.6"/><path d="M10.3 9.5V15H12.5V10.5Z" fill="#f0cc60"/></svg>
<svg class="a" style="left:715.3px;top:283.84000000000003px;" width="13" height="15" viewBox="0 0 13 15"><text x="5.6" y="12" text-anchor="middle" font-family="Liberation Sans" font-weight="bold" font-size="13.5" fill="#000">?</text></svg>
<div class="t" style="top:284.03px;font-size:11px;line-height:14px;left:733.5px;">cgi-bin</div>
<svg class="a" style="left:703px;top:307.05px;" width="12" height="1" viewBox="0 0 12 1"><path d="M0 0.5H12" stroke="#9a9a9a" stroke-width="1" stroke-dasharray="1 1"/></svg>
<svg class="a" style="left:715.3px;top:300.55px;" width="13" height="15" viewBox="0 0 13 15"><path d="M0.5 0.5H11.5V15H0.5Z" fill="url(#fg)" stroke="#e8c55a" stroke-width="0.6"/><path d="M10.3 9.5V15H12.5V10.5Z" fill="#f0cc60"/></svg>
<svg class="a" style="left:715.3px;top:300.55px;" width="13" height="15" viewBox="0 0 13 15"><text x="5.6" y="12" text-anchor="middle" font-family="Liberation Sans" font-weight="bold" font-size="13.5" fill="#000">?</text></svg>
<div class="t" style="top:300.74px;font-size:11px;line-height:14px;left:733.5px;">database</div>
<svg class="a" style="left:703px;top:323.76px;" width="12" height="1" viewBox="0 0 12 1"><path d="M0 0.5H12" stroke="#9a9a9a" stroke-width="1" stroke-dasharray="1 1"/></svg>
<svg class="a" style="left:715.3px;top:317.26px;" width="13" height="15" viewBox="0 0 13 15"><path d="M0.5 0.5H11.5V15H0.5Z" fill="url(#fg)" stroke="#e8c55a" stroke-width="0.6"/><path d="M10.3 9.5V15H12.5V10.5Z" fill="#f0cc60"/></svg>
<svg class="a" style="left:715.3px;top:317.26px;" width="13" height="15" viewBox="0 0 13 15"><text x="5.6" y="12" text-anchor="middle" font-family="Liberation Sans" font-weight="bold" font-size="13.5" fill="#000">?</text></svg>
<div class="t" style="top:317.45px;font-size:11px;line-height:14px;left:733.5px;">lib</div>
<svg class="a" style="left:703px;top:340.47px;" width="12" height="1" viewBox="0 0 12 1"><path d="M0 0.5H12" stroke="#9a9a9a" stroke-width="1" stroke-dasharray="1 1"/></svg>
<svg class="a" style="left:715.3px;top:333.97px;" width="13" height="15" viewBox="0 0 13 15"><path d="M0.5 0.5H11.5V15H0.5Z" fill="url(#fg)" stroke="#e8c55a" stroke-width="0.6"/><path d="M10.3 9.5V15H12.5V10.5Z" fill="#f0cc60"/></svg>
<svg class="a" style="left:715.3px;top:333.97px;" width="13" height="15" viewBox="0 0 13 15"><text x="5.6" y="12" text-anchor="middle" font-family="Liberation Sans" font-weight="bold" font-size="13.5" fill="#000">?</text></svg>
<div class="t" style="top:334.16px;font-size:11px;line-height:14px;left:733.5px;">media</div>
<svg class="a" style="left:703px;top:357.18px;" width="12" height="1" viewBox="0 0 12 1"><path d="M0 0.5H12" stroke="#9a9a9a" stroke-width="1" stroke-dasharray="1 1"/></svg>
<svg class="a" style="left:715.3px;top:350.68px;" width="13" height="15" viewBox="0 0 13 15"><path d="M0.5 0.5H11.5V15H0.5Z" fill="url(#fg)" stroke="#e8c55a" stroke-width="0.6"/><path d="M10.3 9.5V15H12.5V10.5Z" fill="#f0cc60"/></svg>
<svg class="a" style="left:715.3px;top:350.68px;" width="13" height="15" viewBox="0 0 13 15"><text x="5.6" y="12" text-anchor="middle" font-family="Liberation Sans" font-weight="bold" font-size="13.5" fill="#000">?</text></svg>
<div class="t" style="top:350.87px;font-size:11px;line-height:14px;left:733.5px;">PHPMailer</div>
<svg class="a" style="left:715.3px;top:367.39px;" width="13" height="15" viewBox="0 0 13 15"><path d="M0.5 0.5H11.5V15H0.5Z" fill="url(#fg)" stroke="#e8c55a" stroke-width="0.6"/><path d="M10.3 9.5V15H12.5V10.5Z" fill="#f0cc60"/></svg>
<div class="t" style="top:367.58px;font-size:11px;line-height:14px;left:733.5px;">public</div>
<svg class="a" style="left:703px;top:216px;" width="1" height="158" viewBox="0 0 1 158"><path d="M0.5 0V158" stroke="#9a9a9a" stroke-width="1" stroke-dasharray="1 1"/></svg>
<div class="a" style="left:699.5px;top:371.5px;width:9px;height:9px;background:#fff;border:1px solid #a8a8a8;"></div>
<div class="a" style="left:701.5px;top:375.5px;width:5px;height:1px;background:#3a5a90;"></div>
<svg class="a" style="left:709px;top:375.5px;" width="6" height="1" viewBox="0 0 6 1"><path d="M0 0.5H6" stroke="#9a9a9a" stroke-width="1" stroke-dasharray="1 1"/></svg>
<div class="a" style="left:1322px;top:216px;width:16px;height:164px;background:#f0f0f0;"></div>
<svg class="a" style="left:1325.5px;top:221px;" width="9" height="6" viewBox="0 0 9 6"><path d="M0.8 5L4.5 1.2L8.2 5" fill="none" stroke="#606060" stroke-width="1.6"/></svg>
<div class="a" style="left:1323px;top:236px;width:14px;height:20px;background:#cdcdcd;"></div>
<svg class="a" style="left:1325.5px;top:369px;" width="9" height="6" viewBox="0 0 9 6"><path d="M0.8 1L4.5 4.8L8.2 1" fill="none" stroke="#606060" stroke-width="1.6"/></svg>
<div class="a" style="left:674px;top:380px;width:666px;height:3px;background:#f0f0f0;"></div>
<div class="a" style="left:674px;top:385px;width:666px;height:266px;background:#f0f0f0;border-top:1px solid #8c8c8c;border-left:1px solid #8c8c8c;"></div>
<div class="a" style="left:675px;top:386px;width:665px;height:1px;background:#696969;"></div>
<div class="a" style="left:676px;top:387px;width:663px;height:211px;background:#fff;"></div>
<div class="a" style="left:960px;top:389px;width:1px;height:18px;background:#e5e5e5;"></div>
<div class="a" style="left:1030px;top:389px;width:1px;height:18px;background:#e5e5e5;"></div>
<div class="a" style="left:1104px;top:389px;width:1px;height:18px;background:#e5e5e5;"></div>
<div class="a" style="left:1244px;top:389px;width:1px;height:18px;background:#e5e5e5;"></div>
<div class="a" style="left:1318px;top:389px;width:1px;height:18px;background:#e5e5e5;"></div>
<div class="t" style="top:390.99px;font-size:11px;line-height:14px;left:681.7px;">Filename</div>
<div class="t" style="top:390.99px;font-size:11px;line-height:14px;left:945.8px;width:80px;text-align:right;transform:scaleX(0.92);transform-origin:100% 0;">Filesize</div>
<div class="t" style="top:390.99px;font-size:11px;line-height:14px;left:1036.5px;">Filetype</div>
<div class="t" style="top:390.99px;font-size:11px;line-height:14px;left:1111px;">Last modified</div>
<svg class="a" style="left:1171px;top:387.5px;" width="8" height="5" viewBox="0 0 8 5"><path d="M0.5 0.5L4 4L7.5 0.5" fill="none" stroke="#aaa" stroke-width="0.9"/></svg>
<div class="t" style="top:390.99px;font-size:11px;line-height:14px;left:1250.6px;">Permissions</div>
<div class="a" style="left:1320px;top:389px;width:18px;height:16px;overflow:hidden"><div class="t" style="left:5px;top:1.2px;font-size:11px;line-height:14px">Owner/Group</div></div>
<div class="a" style="left:1338px;top:388px;width:2px;height:210px;background:#f0f0f0;"></div>
<svg class="a" style="left:680.8px;top:410px;" width="13" height="15" viewBox="0 0 13 15"><path d="M0.5 0.5H11.5V15H0.5Z" fill="url(#fg)" stroke="#e8c55a" stroke-width="0.6"/><path d="M10.3 9.5V15H12.5V10.5Z" fill="#f0cc60"/></svg>
<div class="t" style="top:410.69px;font-size:11px;line-height:14px;left:696px;">..</div>
<div class="a" style="left:676px;top:584px;width:663px;height:14px;background:#f0f0f0;"></div>
<svg class="a" style="left:680px;top:587px;" width="6" height="9" viewBox="0 0 6 9"><path d="M5 0.8L1.2 4.5L5 8.2" fill="none" stroke="#606060" stroke-width="1.6"/></svg>
<div class="a" style="left:692px;top:585px;width:576px;height:12px;background:#cdcdcd;"></div>
<svg class="a" style="left:1327px;top:587px;" width="6" height="9" viewBox="0 0 6 9"><path d="M1 0.8L4.8 4.5L1 8.2" fill="none" stroke="#606060" stroke-width="1.6"/></svg>
<div class="a" style="left:675px;top:598px;width:665px;height:1px;background:#696969;"></div>
<div class="a" style="left:676px;top:599px;width:663px;height:30px;background:#f0f0f0;"></div>
<div class="t" style="top:606.69px;font-size:11px;line-height:14px;left:680.7px;transform:scaleX(0.95);transform-origin:0 0;">Quick Search:</div>
<div class="a" style="left:756px;top:603px;width:525px;height:22px;background:#fff;border:1px solid #0078d7;"></div>
<div class="t" style="top:607.19px;font-size:11px;line-height:14px;left:762px;">hhp</div>
<div class="a" style="left:782px;top:607px;width:1px;height:14px;background:#000;"></div>
<div class="a" style="left:1287px;top:603px;width:20px;height:21px;background:#e1e1e1;border:1px solid #adadad;"></div>
<svg class="a" style="left:1293px;top:612px;" width="8" height="4" viewBox="0 0 8 4"><path d="M0 0H8L4 4Z" fill="#444"/></svg>
<div class="a" style="left:1313px;top:603px;width:20px;height:21px;background:#e1e1e1;border:1px solid #adadad;"></div>
<svg class="a" style="left:1318px;top:609px;" width="10" height="10" viewBox="0 0 10 10"><path d="M1.5 1.5L8.5 8.5M8.5 1.5L1.5 8.5" stroke="#333" stroke-width="2.2"/></svg>
<div class="a" style="left:675px;top:629px;width:665px;height:1px;background:#c8c8c8;"></div>
<div class="t" style="top:635.19px;font-size:11px;line-height:14px;left:677.7px;">Empty directory. (87 objects filtered)</div>
<svg class="a" style="left:756px;top:553px;" width="14" height="20" viewBox="0 0 14 20"><path d="M1.2 1L1.2 15.2L4.6 12.2L7 17.5L9.4 16.4L7.1 11.5H11.6Z" fill="#fff" stroke="#4a4a4a" stroke-width="1.1" stroke-linejoin="round"/></svg>
<div class="a" style="left:0px;top:656px;width:1340px;height:97px;background:#fff;border-left:1px solid #8c8c8c;border-bottom:1px solid #9c9c9c;"></div>
<div class="a" style="left:0px;top:656px;width:1340px;height:1px;background:#a8a8a8;"></div>
<div class="a" style="left:0px;top:657px;width:1340px;height:1px;background:#c4c4c4;"></div>
<div class="a" style="left:1px;top:657px;width:1px;height:95px;background:#9a9a9a;"></div>
<div class="a" style="left:168px;top:659px;width:1px;height:18px;background:#e5e5e5;"></div>
<div class="a" style="left:224px;top:659px;width:1px;height:18px;background:#e5e5e5;"></div>
<div class="a" style="left:392px;top:659px;width:1px;height:18px;background:#e5e5e5;"></div>
<div class="a" style="left:466px;top:659px;width:1px;height:18px;background:#e5e5e5;"></div>
<div class="a" style="left:522px;top:659px;width:1px;height:18px;background:#e5e5e5;"></div>
<div class="a" style="left:662px;top:659px;width:1px;height:18px;background:#e5e5e5;"></div>
<div class="t" style="top:662.69px;font-size:11px;line-height:14px;left:7.4px;">Server/Local file</div>
<div class="t" style="top:662.69px;font-size:11px;line-height:14px;left:175px;">Direction</div>
<div class="t" style="top:662.69px;font-size:11px;line-height:14px;left:231px;">Remote file</div>
<div class="t" style="top:662.69px;font-size:11px;line-height:14px;left:401.3px;width:60px;text-align:right;">Size</div>
<div class="t" style="top:662.69px;font-size:11px;line-height:14px;left:472.6px;">Priority</div>
<div class="t" style="top:662.69px;font-size:11px;line-height:14px;left:528.6px;">Status</div>
<div class="a" style="left:0px;top:753px;width:1340px;height:26px;background:#f0f0f0;"></div>
<div class="a" style="left:0px;top:753px;width:1340px;height:1px;background:#fafafa;"></div>
<div class="a" style="left:0px;top:755px;width:1340px;height:23px;background:#e0e0e0;background:linear-gradient(#cdcdcd,#e9e9e9 70%,#eeeeee);"></div>
<div class="a" style="left:101.5px;top:756.5px;width:93.5px;height:18.5px;background:#e3e3e3;border:1px solid #c4c4c4;border-top:none;border-radius:0 0 3px 3px;background:linear-gradient(#eaeaea,#dcdcdc);"></div>
<div class="a" style="left:195.5px;top:756.5px;width:142px;height:18.5px;background:#e3e3e3;border:1px solid #c4c4c4;border-top:none;border-radius:0 0 3px 3px;background:linear-gradient(#eaeaea,#dcdcdc);"></div>
<div class="a" style="left:5.5px;top:755.5px;width:96px;height:19.5px;background:#fff;border:1px solid #b4b4b4;border-top:none;border-radius:0 0 3px 3px;background:linear-gradient(#fff,#f4f4f4);"></div>
<div class="t" style="top:757.19px;font-size:11px;line-height:14px;left:12.5px;font-weight:bold;transform:scaleX(0.975);transform-origin:0 0;">Queued files</div>
<div class="t" style="top:757.19px;font-size:11px;line-height:14px;left:109.5px;transform:scaleX(0.955);transform-origin:0 0;">Failed transfers</div>
<div class="t" style="top:757.19px;font-size:11px;line-height:14px;left:202.7px;transform:scaleX(0.96);transform-origin:0 0;">Successful transfers (22)</div>
<div class="a" style="left:0px;top:778px;width:1340px;height:1px;background:#dadada;"></div>
<svg class="a" style="left:1130px;top:781px;" width="16" height="16" viewBox="0 0 16 16"><path d="M3.5 8V5.5A4.5 4.5 0 0 1 12.5 5.5V8" fill="none" stroke="#6b6b6b" stroke-width="2"/><rect x="0.5" y="7.5" width="15" height="8.5" fill="#f5b800"/><rect x="7" y="10" width="2" height="3.5" fill="#5a4300"/></svg>
<svg class="a" style="left:1148px;top:782px;" width="15" height="15" viewBox="0 0 15 15"><path d="M14.76 6.78 L14.76 8.22 L12.86 9.13 L12.44 10.14 L13.14 12.13 L12.13 13.14 L10.14 12.44 L9.13 12.86 L8.22 14.76 L6.78 14.76 L5.87 12.86 L4.86 12.44 L2.87 13.14 L1.86 12.13 L2.56 10.14 L2.14 9.13 L0.24 8.22 L0.24 6.78 L2.14 5.87 L2.56 4.86 L1.86 2.87 L2.87 1.86 L4.86 2.56 L5.87 2.14 L6.78 0.24 L8.22 0.24 L9.13 2.14 L10.14 2.56 L12.13 1.86 L13.14 2.87 L12.44 4.86 L12.86 5.87Z" fill="#5a5a5a"/><circle cx="7.5" cy="7.5" r="4.6" fill="#e8e8e8"/><circle cx="7.5" cy="7.5" r="3.7" fill="#3fbf3f"/><text x="7.5" y="10.2" text-anchor="middle" font-family="Liberation Sans" font-weight="bold" font-size="7" fill="#fff">A</text></svg>
<svg class="a" style="left:1166px;top:782px;" width="15" height="15" viewBox="0 0 15 15"><circle cx="7.5" cy="7.5" r="6.8" fill="#fff" stroke="#666" stroke-width="1.2"/><circle cx="7.5" cy="7.5" r="4.8" fill="none" stroke="#888" stroke-width="1"/><path d="M7.5 8L10.5 4" stroke="#444" stroke-width="1.3"/></svg>
<div class="t" style="top:782.69px;font-size:11px;line-height:14px;left:1189.8px;">Queue: empty</div>
<div class="a" style="left:1302px;top:781px;width:1px;height:18px;background:#d4d4d4;"></div>
<svg class="a" style="left:1311px;top:785px;" width="10" height="10" viewBox="0 0 10 10"><defs><radialGradient id="gg" cx=".4" cy=".35" r=".7"><stop offset="0" stop-color="#5fc25f"/><stop offset="1" stop-color="#0a5a0a"/></radialGradient><radialGradient id="rg" cx=".4" cy=".35" r=".7"><stop offset="0" stop-color="#c04848"/><stop offset="1" stop-color="#5a0808"/></radialGradient></defs><circle cx="5" cy="5" r="4.6" fill="url(#gg)"/></svg>
<svg class="a" style="left:1325px;top:785px;" width="10" height="10" viewBox="0 0 10 10"><circle cx="5" cy="5" r="4.6" fill="url(#rg)"/></svg>
<div class="a" style="left:478.5px;top:752px;width:383px;height:39.5px;background:#fff;box-shadow:0 1px 3px rgba(0,0,0,.35);"></div>
<div class="a" style="left:488px;top:766.5px;width:1.5px;height:10px;background:#c8c8c8;"></div>
<div class="a" style="left:492.5px;top:766.5px;width:1.5px;height:10px;background:#c8c8c8;"></div>
<div class="t" style="top:764.95px;font-size:11.1px;line-height:14px;left:503.6px;color:#202124;transform:scaleX(0.987);transform-origin:0 0;">srilance.softileo.com is sharing your screen.</div>
<div class="a" style="left:725px;top:757px;width:94px;height:30px;background:#1a73e8;border-radius:4px;"></div>
<div class="t" style="top:765.08px;font-size:11.3px;line-height:15px;left:724.5px;width:94px;text-align:center;color:#fff;font-weight:bold;transform:scaleX(0.92);transform-origin:50% 0;">Stop sharing</div>
<div class="t" style="top:764.32px;font-size:11.5px;line-height:15px;left:828.8px;color:#1a73e8;">Hide</div>
<div class="a" style="left:0px;top:800px;width:1340px;height:37px;background:#202020;"></div>
<svg class="a" style="left:15px;top:811px;" width="15.5" height="15.5" viewBox="0 0 17 17"><path d="M0 2.3L6.9 1.3V8H0Z M8 1.1L16.5 0V8H8Z M0 9H6.9V15.7L0 14.7Z M8 9H16.5V17L8 15.9Z" fill="#fff"/></svg>
<div class="a" style="left:45px;top:800px;width:320px;height:37px;background:#f0f0f0;border:1px solid #d0d0d0;"></div>
<svg class="a" style="left:56px;top:811px;" width="15" height="15" viewBox="0 0 15 15"><circle cx="9.3" cy="5.7" r="4.6" fill="none" stroke="#222" stroke-width="1.4"/><path d="M6 9L1 14" stroke="#222" stroke-width="1.6"/></svg>
<div class="t" style="top:811.06px;font-size:13.4px;line-height:17px;left:82px;color:#333;">Type here to search</div>
<svg class="a" style="left:379px;top:810px;" width="17" height="17" viewBox="0 0 17 17"><circle cx="8.5" cy="8.5" r="7" fill="none" stroke="#fff" stroke-width="1.9"/></svg>
<svg class="a" style="left:422px;top:810px;" width="19" height="17" viewBox="0 0 19 17"><rect x="1" y="3" width="12" height="10.5" fill="none" stroke="#fff" stroke-width="1.3"/><path d="M0 1H14M0 15.8H14" stroke="#fff" stroke-width="1.3"/><path d="M16.5 1V4.5M16.5 6.5V15.5" stroke="#fff" stroke-width="1.4"/></svg>
<div class="a" style="left:639px;top:800px;width:45px;height:37px;background:#3b3b3b;"></div>
<svg class="a" style="left:468px;top:809px;" width="22" height="18" viewBox="0 0 22 18"><path d="M0.5 2H8L10 4H21.5V17.5H0.5Z" fill="#f2c14e"/><rect x="0.5" y="6" width="21" height="11.5" fill="#ffd766"/><rect x="6.5" y="9" width="9" height="4" fill="#2b8fd6"/><rect x="8.5" y="13" width="5" height="4.5" fill="#2b8fd6"/></svg>
<svg class="a" style="left:513px;top:809px;" width="23" height="19" viewBox="0 0 23 19"><rect x="0" y="0" width="23" height="19" rx="2" fill="#4a4a4a"/><path d="M6.5 6.5L16.5 3.5V7L11 8.8L16.5 10.5V14L6.5 17V13.5L12 11.8L6.5 10Z" fill="#f59f0f"/></svg>
<svg class="a" style="left:559px;top:808px;" width="24" height="22" viewBox="0 0 24 22"><ellipse cx="10.5" cy="10" rx="10" ry="5.6" fill="#b0b0b0" transform="rotate(-22 10.5 10)"/><ellipse cx="11" cy="7.8" rx="10" ry="5.6" fill="#f4f4f4" stroke="#d03030" stroke-width="1" transform="rotate(-22 11 7.8)"/><path d="M8 4L12.5 13M14 4.5L10.5 12" stroke="#777" stroke-width="1"/><ellipse cx="13" cy="17.5" rx="1.8" ry="3" fill="none" stroke="#2b7fc4" stroke-width="1.5" transform="rotate(20 13 17.5)"/><ellipse cx="17.5" cy="15" rx="1.8" ry="3" fill="none" stroke="#2b7fc4" stroke-width="1.5" transform="rotate(-40 17.5 15)"/></svg>
<svg class="a" style="left:605px;top:807px;" width="25" height="24" viewBox="0 0 25 24"><circle cx="10.5" cy="10.5" r="10" fill="#db4437"/><path d="M10.5 10.5L1.8 15.5A10 10 0 0 0 15.5 19.2Z" fill="#0f9d58"/><path d="M10.5 10.5L15.5 19.2A10 10 0 0 0 19.3 5.5H10.5Z" fill="#f4b400"/><circle cx="10.5" cy="10.5" r="4.3" fill="#fff"/><circle cx="10.5" cy="10.5" r="3.4" fill="#4285f4"/><circle cx="17.8" cy="16.6" r="6.2" fill="#e8eaed" stroke="#202020" stroke-width="0.8"/><circle cx="17.8" cy="14.6" r="2" fill="#5f6368"/><path d="M14 20.2A3.9 3.2 0 0 1 21.6 20.2Z" fill="#5f6368"/></svg>
<svg class="a" style="left:650px;top:808px;" width="23" height="21" viewBox="0 0 23 21"><rect x="0" y="0" width="23" height="21" fill="#bf1f1f"/><rect x="0.5" y="0.5" width="22" height="20" fill="none" stroke="#7a0000" stroke-dasharray="1 1"/><text x="11.5" y="16" text-anchor="middle" font-family="Liberation Sans" font-style="italic" font-weight="bold" font-size="15" fill="#fff">Fz</text></svg>
<svg class="a" style="left:696px;top:807px;" width="21" height="20" viewBox="0 0 21 20"><defs><linearGradient id="wg" x1="0" y1="0" x2="0" y2="1"><stop offset="0" stop-color="#d6e4f7"/><stop offset="1" stop-color="#ffffff"/></linearGradient></defs><path d="M0.5 0.5H19.5V16L16 19.5H0.5Z" fill="url(#wg)" stroke="#aac3e6" stroke-width="0.8"/><text x="8.8" y="13.5" text-anchor="middle" font-family="Liberation Sans" font-weight="bold" font-size="13" fill="#1e5bb8">W</text><path d="M14 14L20 11.5V17L16 19.5Z" fill="#fff"/></svg>
<svg class="a" style="left:742px;top:807px;" width="25" height="24" viewBox="0 0 25 24"><circle cx="10.5" cy="10.5" r="10" fill="#db4437"/><path d="M10.5 10.5L1.8 15.5A10 10 0 0 0 15.5 19.2Z" fill="#0f9d58"/><path d="M10.5 10.5L15.5 19.2A10 10 0 0 0 19.3 5.5H10.5Z" fill="#f4b400"/><circle cx="10.5" cy="10.5" r="4.3" fill="#fff"/><circle cx="10.5" cy="10.5" r="3.4" fill="#4285f4"/><circle cx="17.8" cy="16.6" r="6.2" fill="#3c4043" stroke="#202020" stroke-width="0.8"/><circle cx="17.8" cy="14.6" r="2" fill="#fff"/><path d="M14 20.2A3.9 3.2 0 0 1 21.6 20.2Z" fill="#fff"/></svg>
<svg class="a" style="left:788px;top:807px;" width="21" height="23" viewBox="0 0 21 23"><path d="M0.5 1.5L10.5 6L20.5 1.5V15.5L10.5 22.5L0.5 15.5Z" fill="#c62d2d"/><path d="M3.5 6L10.5 9.2L17.5 6V14L10.5 19L3.5 14Z" fill="#202020"/></svg>
<svg class="a" style="left:835px;top:807px;" width="18" height="23" viewBox="0 0 18 23"><rect x="0.5" y="0.5" width="17" height="22" rx="1" fill="#5d6b75"/><rect x="2" y="2" width="14" height="4" fill="#41c8f0"/><g fill="#d7dde2"><rect x="2" y="8" width="3.8" height="3.5"/><rect x="7.1" y="8" width="3.8" height="3.5"/><rect x="12.2" y="8" width="3.8" height="3.5"/><rect x="2" y="12.8" width="3.8" height="3.5"/><rect x="7.1" y="12.8" width="3.8" height="3.5"/><rect x="2" y="17.6" width="3.8" height="3.5"/><rect x="7.1" y="17.6" width="3.8" height="3.5"/></g><rect x="12.2" y="12.8" width="3.8" height="8.3" fill="#1a5fb4"/></svg>
<div class="a" style="left:506px;top:835px;width:38px;height:2px;background:#76b9ed;"></div>
<div class="a" style="left:597px;top:835px;width:38px;height:2px;background:#76b9ed;"></div>
<div class="a" style="left:639px;top:835px;width:45px;height:2px;background:#76b9ed;"></div>
<div class="a" style="left:734px;top:835px;width:37px;height:2px;background:#76b9ed;"></div>
<div class="a" style="left:780px;top:835px;width:37px;height:2px;background:#76b9ed;"></div>
<div class="a" style="left:826px;top:835px;width:36px;height:2px;background:#76b9ed;"></div>
<svg class="a" style="left:1084px;top:809px;" width="22" height="19" viewBox="0 0 22 19"><defs><radialGradient id="sun" cx=".45" cy=".35" r=".65"><stop offset="0" stop-color="#ffe08a"/><stop offset="1" stop-color="#f5a623"/></radialGradient></defs><circle cx="10.5" cy="9" r="8.7" fill="url(#sun)"/><path d="M1 11.5C5 10 9 10.5 12 11.5C15 12.5 18 12 21 11.5" fill="none" stroke="#d8d8d8" stroke-width="1.6"/><path d="M3 14C7 13 11 13.5 14 14.5C16 15 18 14.5 20 14" fill="none" stroke="#e6e6e6" stroke-width="1.4"/></svg>
<div class="t" style="top:812.08px;font-size:11.6px;line-height:15px;left:1113.9px;color:#fff;transform:scaleX(0.98);transform-origin:0 0;">18°C</div>
<div class="t" style="top:812.08px;font-size:11.6px;line-height:15px;left:1148.8px;color:#fff;transform:scaleX(0.98);transform-origin:0 0;">Haze</div>
<svg class="a" style="left:1192px;top:813px;" width="12" height="8" viewBox="0 0 12 8"><path d="M1 6.5L6 1.5L11 6.5" fill="none" stroke="#fff" stroke-width="1.4"/></svg>
<svg class="a" style="left:1211px;top:812px;" width="17" height="15" viewBox="0 0 17 15"><rect x="4.5" y="2.5" width="12" height="8.5" fill="none" stroke="#fff" stroke-width="1.1"/><rect x="0.5" y="0.5" width="5" height="4" fill="#202020" stroke="#fff" stroke-width="1"/><path d="M10.5 11V14M7 14.5H14" stroke="#fff" stroke-width="1.1"/></svg>
<div class="t" style="top:802.28px;font-size:11.6px;line-height:15px;left:1221.0px;width:80px;text-align:center;color:#fff;transform:scaleX(0.89);transform-origin:50% 0;">12:05 PM</div>
<div class="t" style="top:817.98px;font-size:11.6px;line-height:15px;left:1220.6px;width:80px;text-align:center;color:#fff;transform:scaleX(0.9);transform-origin:50% 0;">12/31/2021</div>
<svg class="a" style="left:1301px;top:806px;" width="25" height="26" viewBox="0 0 25 26"><path d="M1.5 1.5H18.5V12.5H11L7 16V12.5H1.5Z" fill="#fff"/><path d="M4 4.5H16M4 7H16M4 9.5H12" stroke="#202020" stroke-width="1"/><circle cx="15.5" cy="17.5" r="6.3" fill="#202020" stroke="#8a8a8a" stroke-width="1.3"/><text x="15.5" y="21.5" text-anchor="middle" font-family="Liberation Sans" font-size="10" fill="#fff">1</text></svg>
<div class="a" style="left:1337px;top:800px;width:1px;height:37px;background:#555;"></div>
</body></html>
